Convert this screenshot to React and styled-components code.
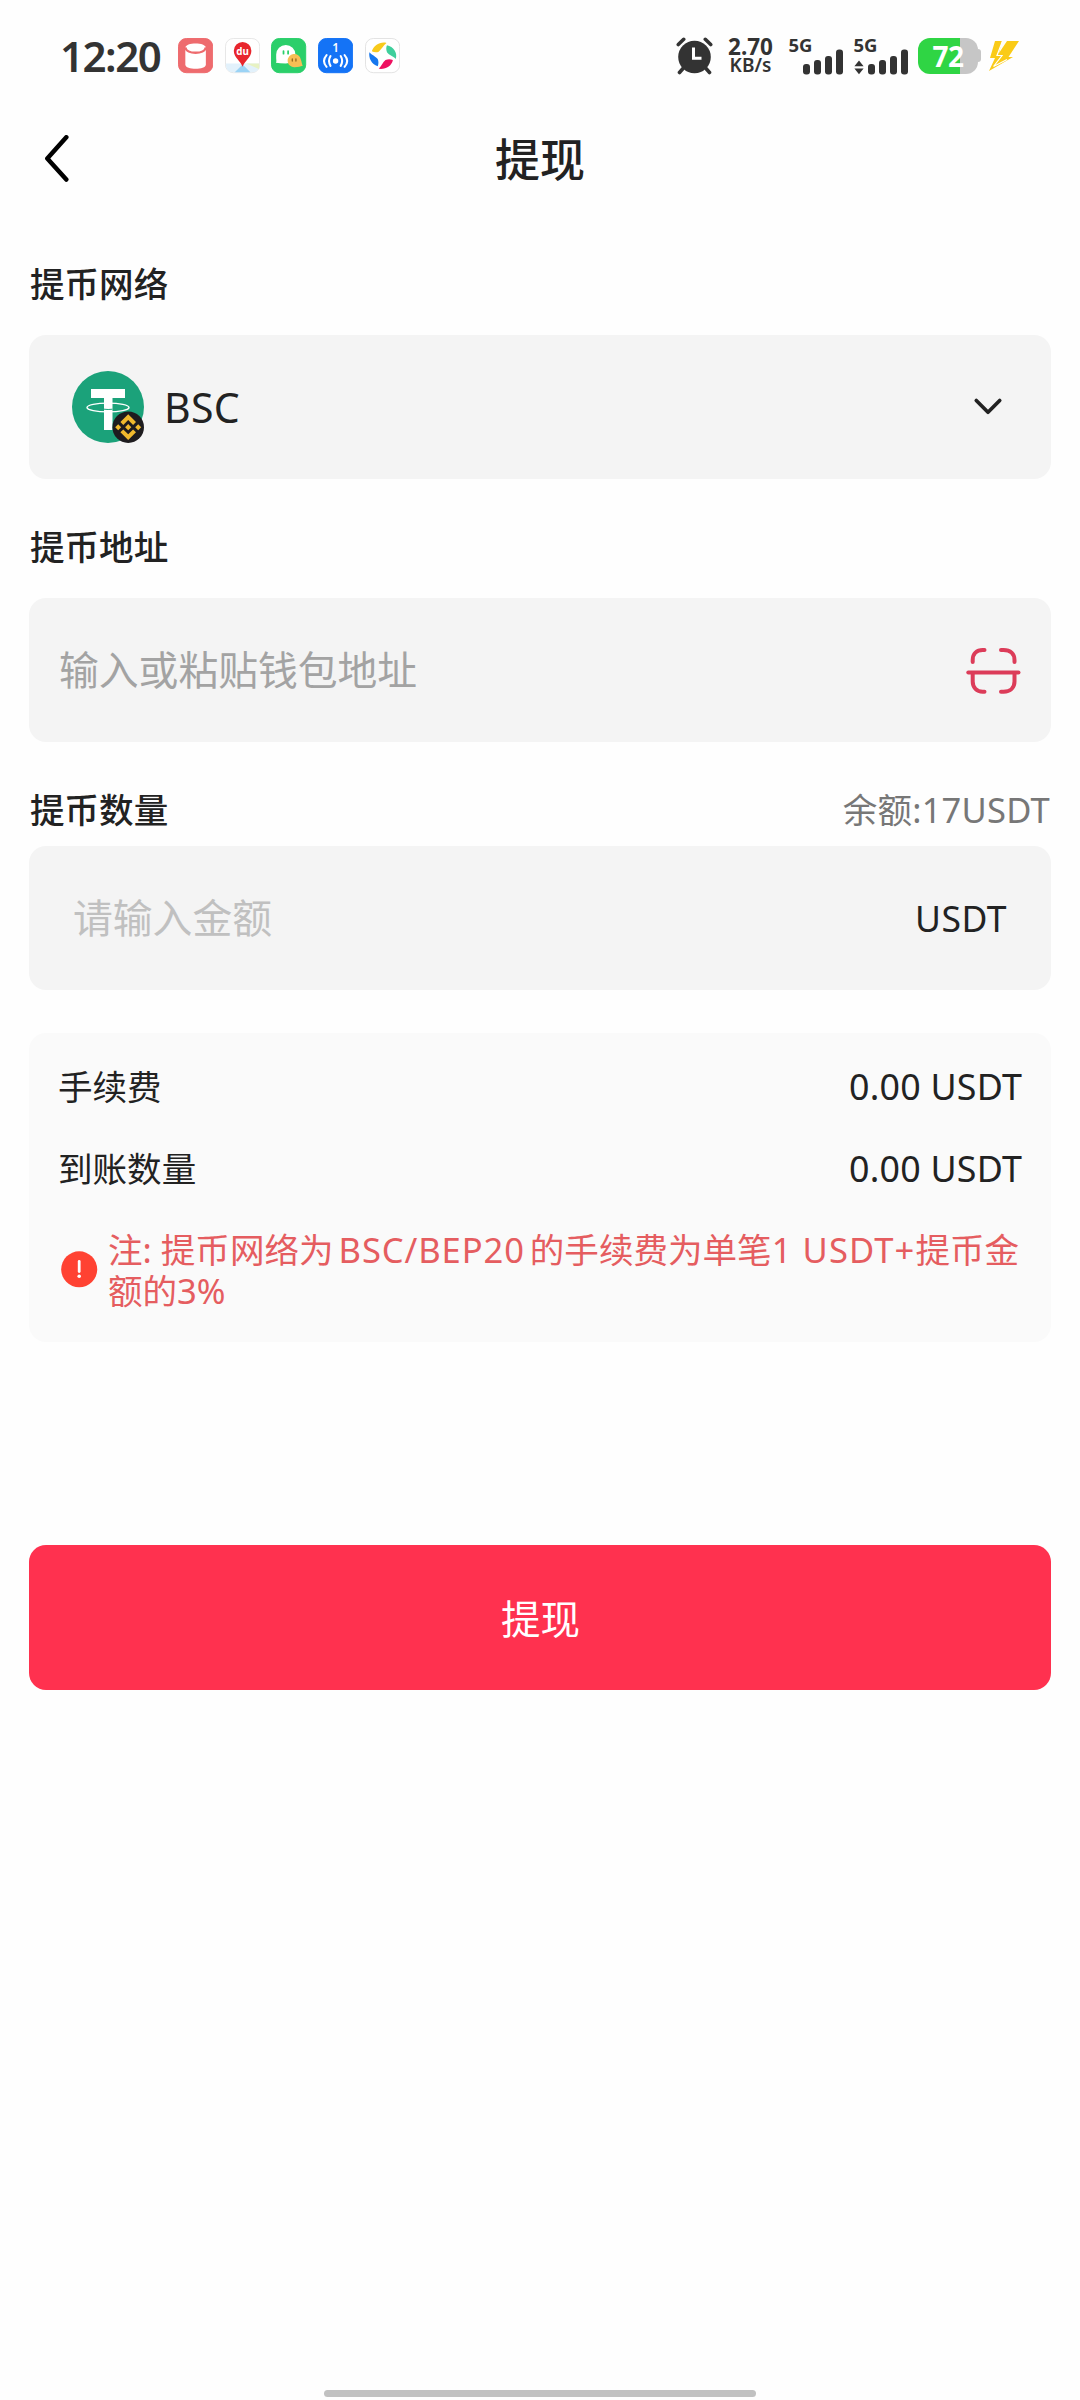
import styled, { createGlobalStyle } from "styled-components";

const GlobalStyle = createGlobalStyle`
  * {
    box-sizing: border-box;
  }
  body {
    margin: 0;
    background-color: #fefefe;
    font-family: "Noto Sans", "Noto Sans CJK SC", sans-serif;
    color: #222222;
  }
`;

const Page = styled.div`
  width: 1080px;
  height: 2400px;
  display: flex;
  flex-direction: column;
  overflow: hidden;
`;

// 状态栏
const StatusBar = styled.div`
  height: 112px;
  padding: 0 61px 0 60px;
  display: flex;
  justify-content: space-between;
  align-items: center;
  flex-shrink: 0;
  color: #333333;
`;
const StatusGroup = styled.div`
  display: flex;
  align-items: center;
`;
const Clock = styled.span`
  width: 118px;
  font-size: 42px;
  font-weight: 600;
  line-height: 50px;
  letter-spacing: -1.5px;
`;
const AppIcons = styled.div`
  display: flex;
  gap: 11.5px;

  svg {
    display: block;
  }
`;
const NetSpeed = styled.div`
  width: 51px;
  margin-left: 12px;
  display: flex;
  flex-direction: column;
  align-items: center;
  font-weight: 600;
  white-space: nowrap;
`;
const SpeedValue = styled.span`
  font-size: 22.5px;
  line-height: 19px;
  font-weight: 700;
`;
const SpeedUnit = styled.span`
  font-size: 19px;
  line-height: 19px;
`;
const SignalIcon = styled.svg`
  display: block;
  overflow: visible;
  margin-left: ${(props) => props.$gap}px;
`;
const Battery = styled.div`
  width: 60px;
  height: 36px;
  margin-left: 9px;
  position: relative;
  display: flex;
  align-items: center;
  justify-content: center;
  border-radius: 12px;
  background: linear-gradient(to right, #2fd544 42px, #c6c6c6 42px);
  color: #ffffff;
  font-size: 28px;
  font-weight: 700;
  line-height: 36px;
  letter-spacing: -0.5px;

  &::after {
    content: "";
    position: absolute;
    left: 60px;
    top: 11px;
    width: 3px;
    height: 13px;
    border-radius: 0 3px 3px 0;
    background-color: #c6c6c6;
  }
`;
const Bolt = styled.svg`
  display: block;
  margin-left: 11px;
`;

// 标题栏
const Header = styled.header`
  height: 96px;
  padding: 0 40px;
  display: grid;
  grid-template-columns: 60px 1fr 60px;
  align-items: center;
  flex-shrink: 0;
`;
const BackButton = styled.button`
  padding: 0;
  border: 0;
  background: none;
  cursor: pointer;

  svg {
    display: block;
  }
`;
const Title = styled.h1`
  margin: 0;
  font-size: 45px;
  font-weight: 500;
  line-height: 60px;
  text-align: center;
`;

// 表单
const Form = styled.main`
  padding: 0 29px;
  display: flex;
  flex-direction: column;
`;
const LabelRow = styled.div`
  height: 52px;
  margin-top: ${(props) => props.$top}px;
  margin-bottom: ${(props) => props.$bottom}px;
  padding: 0 1px;
  display: flex;
  justify-content: space-between;
  align-items: center;
  font-size: 34.56px;
  line-height: 52px;
`;
const Label = styled.span`
  font-weight: 500;
`;
const Balance = styled.span`
  color: #777777;
  letter-spacing: 0.2px;
`;
const Field = styled.div`
  height: 144px;
  padding: 0 ${(props) => props.$padRight}px 0 ${(props) => props.$padLeft}px;
  display: flex;
  align-items: center;
  border-radius: 17px;
  background-color: #f4f4f4;

  svg {
    display: block;
  }
`;
const Network = styled.span`
  flex: 1;
  margin-left: 20px;
  font-size: 41px;
  letter-spacing: 0.3px;
`;
const Placeholder = styled.span`
  flex: 1;
  color: ${(props) => props.$color};
  font-size: 39.8px;
  line-height: 58px;
`;
const Unit = styled.span`
  font-size: 35.5px;
  letter-spacing: 0.5px;
`;

// 费用说明
const FeePanel = styled.section`
  height: 309px;
  margin-top: 43px;
  padding: 13px 29px 0 29px;
  border-radius: 17px;
  background-color: #fafafa;
`;
const FeeRow = styled.div`
  height: 82px;
  display: flex;
  justify-content: space-between;
  align-items: center;
  font-size: 34.56px;
  line-height: 52px;
`;
const FeeValue = styled.span`
  margin-top: -2px;
  font-size: 35.8px;
  letter-spacing: 0.2px;
`;
const Notice = styled.div`
  height: 82px;
  margin-top: 19px;
  display: flex;
  align-items: center;
  color: #e55d60;
  font-size: 34.56px;
  line-height: 41px;
  white-space: nowrap;
`;
const NoticeText = styled.p`
  margin: 0 0 0 10px;
`;
const Chain = styled.span`
  margin: 0 5px 0 5px;
  letter-spacing: 0.9px;
`;
const Amount = styled.span`
  letter-spacing: 1.1px;
`;

const SubmitButton = styled.button`
  height: 145px;
  margin-top: 203px;
  padding: 2px 0 0 1px;
  border: 0;
  border-radius: 17px;
  background-color: #ff314f;
  color: #ffffff;
  font-family: inherit;
  font-size: 39.5px;
  line-height: 56px;
  cursor: pointer;
`;
const HomeIndicator = styled.div`
  width: 432px;
  height: 7px;
  margin: auto auto 3px;
  border-radius: 4px;
  background-color: #c1c1c1;
`;

function AppIcon({ color, border, children }) {
  return (
    <svg width="35.2" height="35.2" viewBox="0 0 36 36">
      <rect x="0.5" y="0.5" width="35" height="35" rx="8" fill={color} stroke={border || color} />
      {children}
    </svg>
  );
}

function AlarmIcon() {
  return (
    <svg width="37" height="38" viewBox="0 0 37 38" fill="none" stroke="#333333" strokeLinecap="round">
      <circle cx="18.5" cy="20" r="16.3" fill="#333333" stroke="none" />
      <path d="M2.3 7.5 7.7 2.3M34.7 7.5 29.3 2.3" strokeWidth="3.6" />
      <path d="M7 31.5 3.5 35.5M30 31.5 33.5 35.5" strokeWidth="3.6" />
      <path d="M17.5 10.5V21.3H25.5" stroke="#ffffff" strokeWidth="3" strokeLinecap="butt" />
    </svg>
  );
}

function Signal({ gap, offset, arrows }) {
  return (
    <SignalIcon $gap={gap} width={offset + 41} height="38" viewBox={`0 0 ${offset + 41} 38`} fill="#333333">
      <text x="-0.5" y="15" fontSize="18.5" fontWeight="700">5G</text>
      {arrows && <path d="M5 23.5 9.6 29.3H0.4ZM5 37.3 9.6 31.5H0.4Z" />}
      <rect x={offset} y="27" width="7" height="10.5" rx="3" />
      <rect x={offset + 11} y="23" width="7" height="14.5" rx="3" />
      <rect x={offset + 22} y="19" width="7" height="18.5" rx="3" />
      <rect x={offset + 33} y="12.5" width="7" height="25" rx="3" />
    </SignalIcon>
  );
}

function UsdtIcon() {
  return (
    <svg width="72" height="72" viewBox="0 0 72 72">
      <circle cx="36" cy="36" r="36" fill="#1ba27a" />
      <path d="M19 18H53V27H40.5V59H32V27H19Z" fill="#ffffff" />
      <path d="M32 38.2Q36 38.8 40.5 38.2" stroke="#1ba27a" fill="none" />
      <ellipse cx="36" cy="36.5" rx="21" ry="4.4" fill="none" stroke="#ffffff" strokeWidth="1.4" />
      <circle cx="56.2" cy="56.2" r="15.8" fill="#1e1c1f" />
      <g fill="#f0b92d">
        <path d="M56.2 43.3 64 51.1 61.1 54 56.2 49.1 51.3 54 48.4 51.1Z" />
        <path d="M56.2 69.1 64 61.3 61.1 58.4 56.2 63.3 51.3 58.4 48.4 61.3Z" />
        <path d="M56.2 53.1 59.3 56.2 56.2 59.3 53.1 56.2Z" />
        <path d="M46.2 53.2 49.2 56.2 46.2 59.2 43.2 56.2Z" />
        <path d="M66.2 53.2 69.2 56.2 66.2 59.2 63.2 56.2Z" />
      </g>
    </svg>
  );
}

function ScanIcon() {
  return (
    <svg width="56" height="50" viewBox="0 0 56 50" fill="none" stroke="#dc3c59" strokeWidth="4" strokeLinecap="round">
      <path d="M2.3 27.6H52.5" />
      <path d="M6.7 17V15C6.7 9 10.7 5 16.7 5H18.5M35 5H37.5C44.5 5 48.5 9 48.5 15V17" />
      <path d="M6.7 28V36.5C6.7 42.5 10.7 46.7 16.7 46.7H18.5M35 46.7H37.5C44.5 46.7 48.5 42.5 48.5 36.5V28" />
    </svg>
  );
}

function App() {
  return (
    <Page>
      <GlobalStyle />
      <StatusBar>
        <StatusGroup>
          <Clock>12:20</Clock>
          <AppIcons>
            <AppIcon color="#ee6b6e">
              <path d="M7.5 10C7.5 4 28.500 4 28.500 10V27C28.500 33 7.500 33 7.500 27Z" fill="#ffffff" />
              <path d="M7.500 9.500C8.500 17 27.500 17 28.500 9.500" fill="none" stroke="#ee6b6e" strokeWidth="2.400" />
            </AppIcon>
            <AppIcon color="#ffffff" border="#e6e6e6">
              <path d="M1 26H35V28Q35 35 28 35H8Q1 35 1 28Z" fill="#e2f1fb" />
              <path d="M22 26H35V32Z" fill="#e7f2c3" />
              <path d="M18 27 26 35H10Z" fill="#9bd3f5" />
              <path d="M18 29.5C16.5 24 9 20 9 13A9 9 0 0 1 27 13C27 20 19.500 24 18 29.500Z" fill="#e8262d" />
              <text x="18" y="17" textAnchor="middle" fontSize="10" fontWeight="700" fill="#ffffff">du</text>
            </AppIcon>
            <AppIcon color="#2bcf6a">
              <path d="M5 25.3C6 24 5.3 22.5 5.3 21V17A9.8 9.8 0 0 1 25 17C25 23 20 26 15 26Q9 26 5 25.3Z" fill="#ffffff" />
              <path d="M12.8 13.5V16M17.5 13.5V16" stroke="#2bcf6a" strokeWidth="1.8" strokeLinecap="round" />
              <path d="M32.5 28.5C31.5 27 31.5 24.5 30.5 22A6.800 6.800 0 1 0 24 30C28 30 30 29 32.5 28.5Z" fill="#f7be55" />
              <path d="M21.8 21.5V23.5M25.5 21.5V23.5" stroke="#9a6b20" strokeWidth="1.4" strokeLinecap="round" />
            </AppIcon>
            <AppIcon color="#1473f6">
              <text x="18" y="14.5" textAnchor="middle" fontSize="12" fontWeight="600" fill="#ffffff">1</text>
              <circle cx="18" cy="23.5" r="2.8" fill="#ffffff" />
              <path
                d="M12.8 18.5Q9.8 23.5 12.8 28.5M8.8 17.5Q3.5 23.5 8.8 29.5M23.2 18.5Q26.2 23.5 23.2 28.5M27.2 17.5Q32.5 23.5 27.2 29.5"
                fill="none"
                stroke="#ffffff"
                strokeWidth="2.1"
                strokeLinecap="round"
              />
            </AppIcon>
            <AppIcon color="#ffffff" border="#e2e2e2">
              <path d="M7 13.5C9 8 15 3.5 22 5C19 7 16.5 12 14 14C11.5 15 9 14.5 7 13.5Z" fill="#f8ca1c" />
              <path d="M22.5 7.5C29 9 33.5 15 31.5 21.5C29.5 18.5 24.5 17.5 22.5 14.5C21.5 12 21.5 9.5 22.5 7.5Z" fill="#3fcf9c" />
              <path d="M28.5 22.5C27.5 28.5 21 32.5 14 31.5C16.5 29 18.5 24.5 21 22.5C23.5 21.5 26 21.5 28.5 22.5Z" fill="#ee1060" />
              <path d="M4.5 14.5C7 17.5 11.5 19 13 21.5C14 24 14 26.5 13 29C6.5 26.5 3.5 20.5 4.5 14.5Z" fill="#1677ee" />
            </AppIcon>
          </AppIcons>
        </StatusGroup>
        <StatusGroup>
          <AlarmIcon />
          <NetSpeed>
            <SpeedValue>2.70</SpeedValue>
            <SpeedUnit>KB/s</SpeedUnit>
          </NetSpeed>
          <Signal gap={13} offset={14} />
          <Signal gap={10} offset={14} arrows />
          <Battery>72</Battery>
          <Bolt width="30" height="30" viewBox="0 0 30 30">
            <path d="M6 0H13L10 12L18 0H30L19.5 16H24L0 30L6 17H1Z" fill="#facb18" />
            <path d="M13.5 0 8 14.5H13L4.5 25.5M18 18.5 4.5 25.5" fill="none" stroke="#ffffff" strokeWidth="1.2" />
          </Bolt>
        </StatusGroup>
      </StatusBar>

      <Header>
        <BackButton aria-label="返回">
          <svg width="32" height="50" viewBox="0 0 32 50" fill="none" stroke="#000000" strokeWidth="4.5" strokeLinecap="round" strokeLinejoin="round">
            <path d="M26.3 2.3 7.3 23.5 26.3 44.5" />
          </svg>
        </BackButton>
        <Title>提现</Title>
      </Header>

      <Form>
        <LabelRow $top={50} $bottom={25}>
          <Label>提币网络</Label>
        </LabelRow>
        <Field $padLeft={43} $padRight={47}>
          <UsdtIcon />
          <Network>BSC</Network>
          <svg width="32" height="20" viewBox="0 0 32 20" fill="none" stroke="#222222" strokeWidth="3.7" strokeLinecap="round" strokeLinejoin="round">
            <path d="M4.3 3.5 16 15.3 27.7 3.5" />
          </svg>
        </Field>

        <LabelRow $top={42} $bottom={25}>
          <Label>提币地址</Label>
        </LabelRow>
        <Field $padLeft={30} $padRight={29}>
          <Placeholder $color="#a3a3a3">输入或粘贴钱包地址</Placeholder>
          <ScanIcon />
        </Field>

        <LabelRow $top={42} $bottom={10}>
          <Label>提币数量</Label>
          <Balance>余额:17USDT</Balance>
        </LabelRow>
        <Field $padLeft={44} $padRight={44}>
          <Placeholder $color="#c0c0c0">请输入金额</Placeholder>
          <Unit>USDT</Unit>
        </Field>

        <FeePanel>
          <FeeRow>
            <span>手续费</span>
            <FeeValue>0.00 USDT</FeeValue>
          </FeeRow>
          <FeeRow>
            <span>到账数量</span>
            <FeeValue>0.00 USDT</FeeValue>
          </FeeRow>
          <Notice>
            <svg width="40" height="40" viewBox="0 0 40 40">
              <circle cx="21.2" cy="19.3" r="18" fill="#ff4232" />
              <path d="M21.2 11.5V21.5" stroke="#ffffff" strokeWidth="2.8" strokeLinecap="round" />
              <circle cx="21.2" cy="26.3" r="1.8" fill="#ffffff" />
            </svg>
            <NoticeText>
              注: 提币网络为<Chain>BSC/BEP20</Chain>的手续费为单笔<Amount>1 USDT+</Amount>提币金
              <br />
              额的3%
            </NoticeText>
          </Notice>
        </FeePanel>

        <SubmitButton>提现</SubmitButton>
      </Form>
      <HomeIndicator />
    </Page>
  );
}

export default App;
